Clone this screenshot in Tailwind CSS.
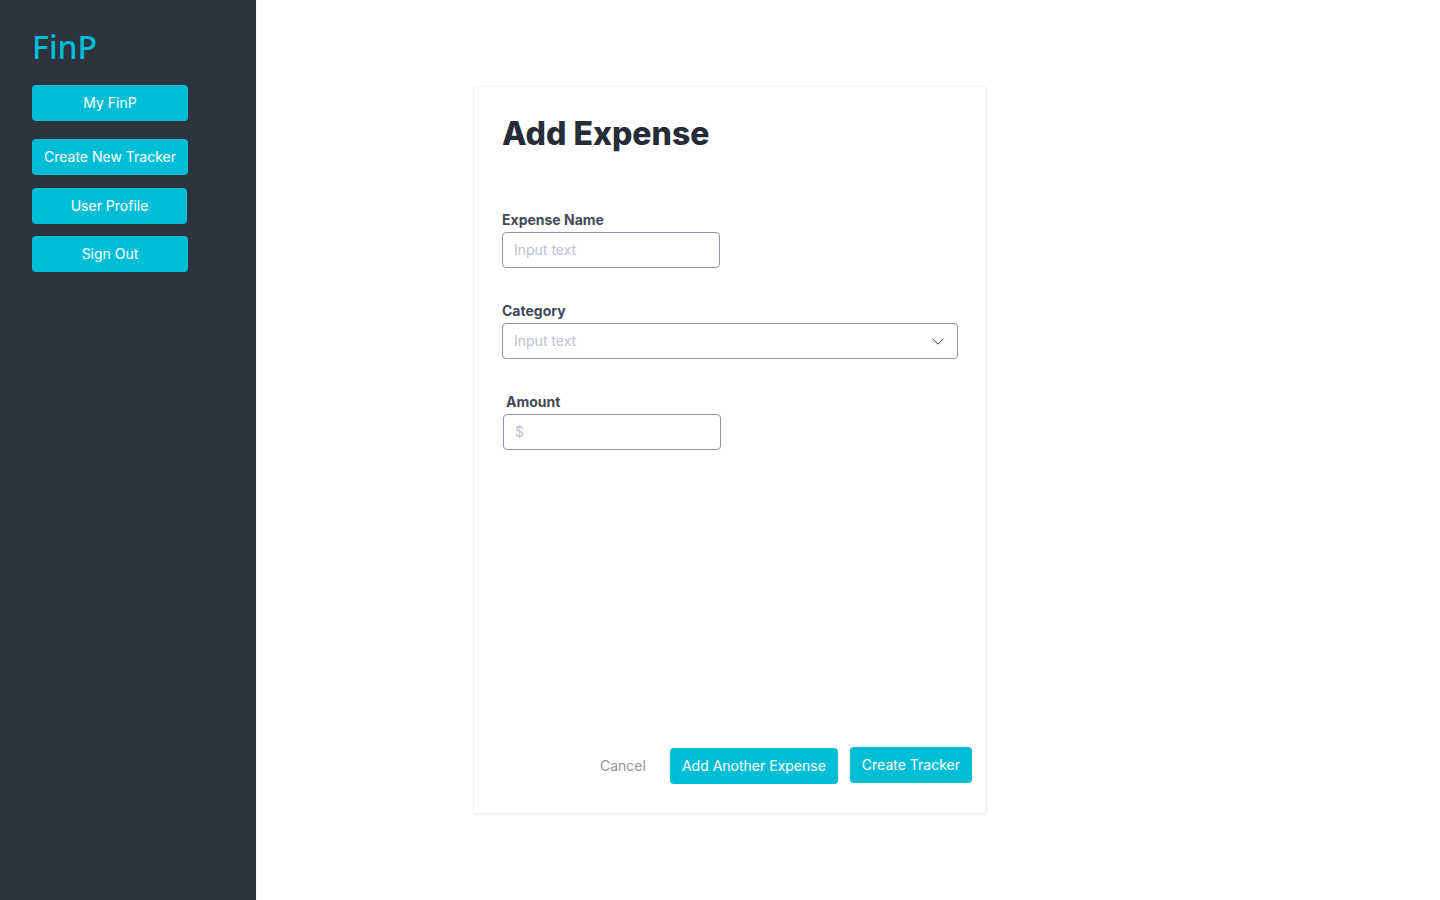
<!DOCTYPE html>
<html lang="en">
<head>
<meta charset="utf-8">
<meta name="viewport" content="width=device-width, initial-scale=1">
<title>FinP – Add Expense</title>
<script src="https://cdn.jsdelivr.net/npm/@tailwindcss/browser@4"></script>
</head>
<body class="flex min-h-screen bg-white font-['Inter',sans-serif] text-sm text-[#424856]">
  <aside class="w-64 shrink-0 bg-[#2e3340] px-8 pt-[27px] shadow-sm">
    <a href="#" class="block font-['Noto_Sans',sans-serif] text-[32px] leading-10 font-medium text-[#00bdd6]">FinP</a>
    <nav class="mt-[18px] flex w-[156px] flex-col">
      <button type="button" class="h-9 rounded bg-[#00bdd6] text-white">My FinP</button>
      <button type="button" class="mt-[18px] h-9 whitespace-nowrap rounded bg-[#00bdd6] text-white">Create New Tracker</button>
      <button type="button" class="mt-[13px] mr-px h-9 rounded bg-[#00bdd6] text-white">User Profile</button>
      <button type="button" class="mt-3 h-9 rounded bg-[#00bdd6] text-white">Sign Out</button>
    </nav>
  </aside>
  <main class="flex flex-1 items-center pl-[217px]">
    <form class="flex min-h-[728px] w-full max-w-[514px] flex-col rounded border border-[#f0f0f2] pt-[23px] pr-3.5 pb-[29px] pl-7 shadow-xs">
      <h1 class="text-[32px] leading-12 font-extrabold text-[#262c38]">Add Expense</h1>
      <div class="mt-[51px] flex flex-col">
        <label for="name" class="leading-[22px] font-bold">Expense Name</label>
        <input id="name" type="text" placeholder="Input text" class="mt-px h-9 w-[218px] rounded border border-[#9095a1] px-[11px] pb-0.5 placeholder:text-[#bcc1ca]">
      </div>
      <div class="mt-8 mr-3.5 flex flex-col">
        <label for="category" class="leading-[22px] font-bold">Category</label>
        <div class="relative mt-px">
          <select id="category" class="h-9 w-full appearance-none rounded border border-[#9095a1] px-[11px] text-[#bcc1ca]">
            <option>Input text</option>
          </select>
          <svg class="pointer-events-none absolute top-2.5 right-3 size-4" viewBox="0 0 16 16" fill="none" stroke="#323743" stroke-width="1" stroke-linecap="square" aria-hidden="true"><path d="M3 6.200 8 11.200l5-5"/></svg>
        </div>
      </div>
      <div class="mt-8 ml-px flex flex-col">
        <label for="amount" class="pl-[3px] leading-[22px] font-bold">Amount</label>
        <input id="amount" type="text" placeholder="$" class="mt-px h-9 w-[218px] rounded border border-[#9095a1] px-[11px] pb-0.5 placeholder:text-[#bcc1ca]">
      </div>
      <div class="mt-auto flex justify-end">
        <button type="button" class="mt-px mr-3 h-9 px-3 text-[#9095a1]">Cancel</button>
        <button type="button" class="mt-px mr-3 h-9 rounded bg-[#00bdd6] px-3 text-white">Add Another Expense</button>
        <button type="submit" class="mb-px h-9 rounded bg-[#00bdd6] px-3 text-white">Create Tracker</button>
      </div>
    </form>
  </main>
</body>
</html>
